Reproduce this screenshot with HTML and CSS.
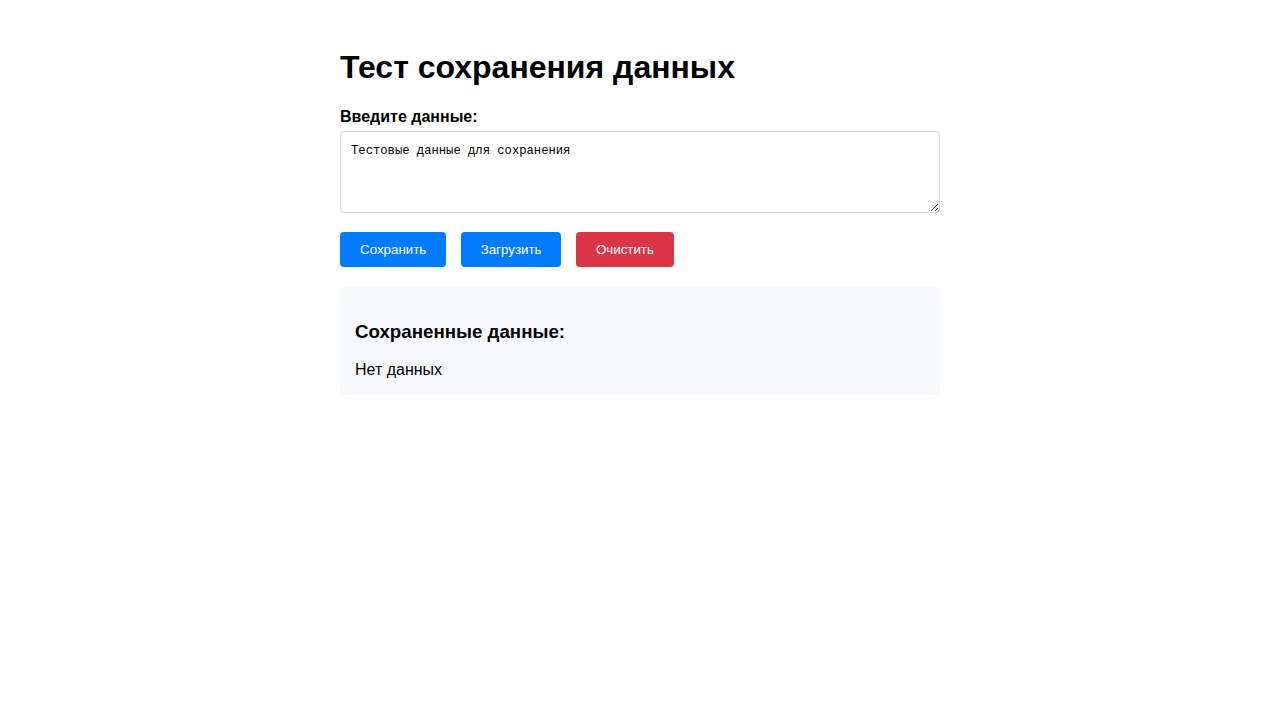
FILE: index.html
```html
<!DOCTYPE html>
<html lang="ru">
<head>
<meta charset="utf-8">
<title>Тест сохранения данных</title>
<link rel="stylesheet" href="styles.css">
</head>
<body>
<div class="container">
  <h1 class="title">Тест сохранения данных</h1>
  <label class="field-label" for="data">Введите данные:</label>
  <textarea id="data" class="field">Тестовые данные для сохранения</textarea>
  <div class="actions">
    <button class="btn btn-primary">Сохранить</button>
    <button class="btn btn-primary">Загрузить</button>
    <button class="btn btn-danger">Очистить</button>
  </div>
  <div class="result">
    <h3 class="result-title">Сохраненные данные:</h3>
    <div class="result-text">Нет данных</div>
  </div>
</div>
</body>
</html>
```
FILE: styles.css
```css
html, body {
  margin: 0;
  padding: 0;
  background: #ffffff;
}
body {
  font-family: "Liberation Sans", Arial, sans-serif;
  font-size: 16px;
  color: #000000;
}
.container {
  width: 600px;
  margin: 0 auto;
  padding-top: 49px;
}
.title {
  font-size: 32px;
  font-weight: bold;
  margin: 0 0 22px 0;
}
.field-label {
  display: block;
  font-weight: bold;
  margin-bottom: 5px;
}
.field {
  display: block;
  width: 100%;
  box-sizing: border-box;
  height: 82px;
  padding: 11px 10px 9px 10px;
  border: 1px solid #dddddd;
  border-radius: 4px;
  font-family: "Liberation Mono", "DejaVu Sans Mono", monospace;
  font-size: 12.2px;
  line-height: 16px;
  color: #000000;
  margin: 0;
}
.actions {
  display: flex;
  gap: 14.4px;
  margin-top: 19px;
}
.btn {
  font-family: "Liberation Sans", Arial, sans-serif;
  font-size: 13.333px;
  padding: 10px 20px;
  border: 0;
  border-radius: 4px;
  color: #ffffff;
  cursor: pointer;
}
.btn-primary {
  background: #007bff;
}
.btn-danger {
  background: #dc3545;
}
.result {
  margin-top: 20px;
  padding: 15px 15px 16px 15px;
  background: #f8f9fa;
  border-radius: 4px;
}
.result-title {
  font-size: 18.72px;
  font-weight: bold;
  margin: 18.72px 0;
}
.result-text {
  margin: 0;
}
```
